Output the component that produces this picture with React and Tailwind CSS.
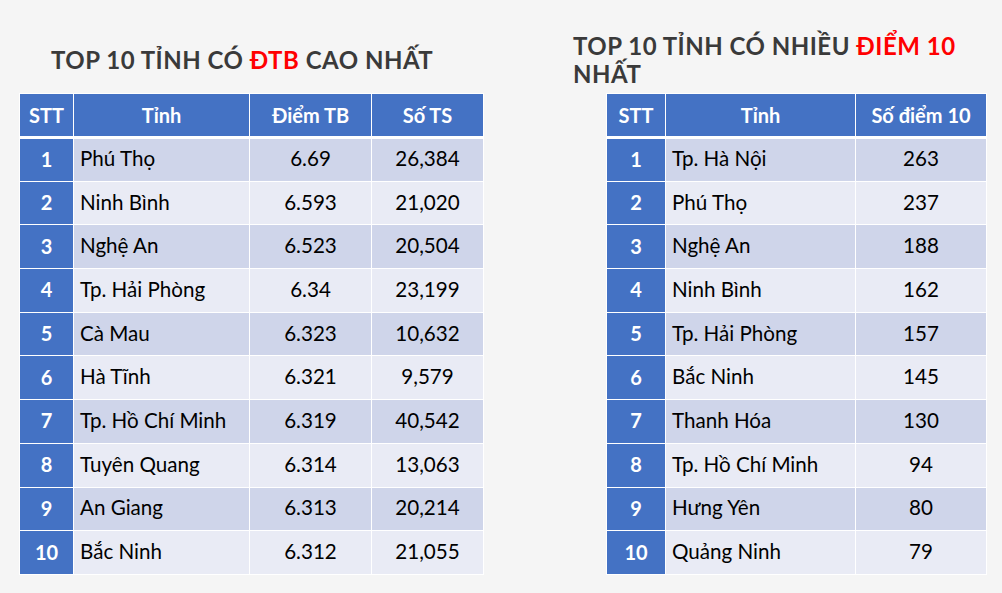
const left = [
  ['1', 'Phú Thọ', '6.69', '26,384'],
  ['2', 'Ninh Bình', '6.593', '21,020'],
  ['3', 'Nghệ An', '6.523', '20,504'],
  ['4', 'Tp. Hải Phòng', '6.34', '23,199'],
  ['5', 'Cà Mau', '6.323', '10,632'],
  ['6', 'Hà Tĩnh', '6.321', '9,579'],
  ['7', 'Tp. Hồ Chí Minh', '6.319', '40,542'],
  ['8', 'Tuyên Quang', '6.314', '13,063'],
  ['9', 'An Giang', '6.313', '20,214'],
  ['10', 'Bắc Ninh', '6.312', '21,055'],
]

const right = [
  ['1', 'Tp. Hà Nội', '263'],
  ['2', 'Phú Thọ', '237'],
  ['3', 'Nghệ An', '188'],
  ['4', 'Ninh Bình', '162'],
  ['5', 'Tp. Hải Phòng', '157'],
  ['6', 'Bắc Ninh', '145'],
  ['7', 'Thanh Hóa', '130'],
  ['8', 'Tp. Hồ Chí Minh', '94'],
  ['9', 'Hưng Yên', '80'],
  ['10', 'Quảng Ninh', '79'],
]

function DataTable({ headers, widths, rows }) {
  return (
    <table className="table-fixed border-collapse text-[20.6px] text-black" style={{ width: widths.reduce((a, b) => a + b, 0) }}>
      <colgroup>
        {widths.map((w, i) => <col key={i} style={{ width: w }} />)}
      </colgroup>
      <thead>
        <tr className="h-[44px]">
          {headers.map((h) => (
            <th key={h} className="bg-[#4472c4] border border-white border-b-[3px] text-white font-bold text-[20px] text-center p-0">{h}</th>
          ))}
        </tr>
      </thead>
      <tbody>
        {rows.map((r, i) => (
          <tr key={r[0]} className={`h-[43.7px] ${i % 2 === 0 ? 'bg-[#cfd5ea]' : 'bg-[#e9ebf5]'}`}>
            <td className="bg-[#4472c4] border border-white text-white font-bold text-[20px] text-center p-0 pb-[2px]">{r[0]}</td>
            <td className="border border-white pl-[6px] p-0 pb-[2px] text-left">{r[1]}</td>
            {r.slice(2).map((v, j) => (
              <td key={j} className="border border-white text-center p-0 pb-[2px]">{v}</td>
            ))}
          </tr>
        ))}
      </tbody>
    </table>
  )
}

export default function App() {
  return (
    <div className="w-[1002px] h-[593px] bg-[#f5f5f5] flex font-['Lato',sans-serif] overflow-hidden">
      <div className="w-[500px] pl-[19px] pt-[26px]">
        <div className="h-[67px] flex items-center pl-[32px]">
          <h1 className="text-[24px] leading-[27px] font-bold text-[#3a3a3a] tracking-[0.5px]">
            TOP 10 TỈNH CÓ <span className="text-[#ff0000]">ĐTB</span> CAO NHẤT
          </h1>
        </div>
        <DataTable headers={['STT', 'Tỉnh', 'Điểm TB', 'Số TS']} widths={[54, 176, 122, 112]} rows={left} />
      </div>
      <div className="flex-1 pl-[73px] pt-[26px]">
        <div className="h-[67px] flex items-center">
          <h1 className="text-[24px] leading-[28px] font-bold text-[#3a3a3a] tracking-[0.5px]">
            TOP 10 TỈNH CÓ NHIỀU <span className="text-[#ff0000]">ĐIỂM 10</span>
            <br />
            NHẤT
          </h1>
        </div>
        <div className="pl-[33px]">
          <DataTable headers={['STT', 'Tỉnh', 'Số điểm 10']} widths={[59, 190, 131]} rows={right} />
        </div>
      </div>
    </div>
  )
}
